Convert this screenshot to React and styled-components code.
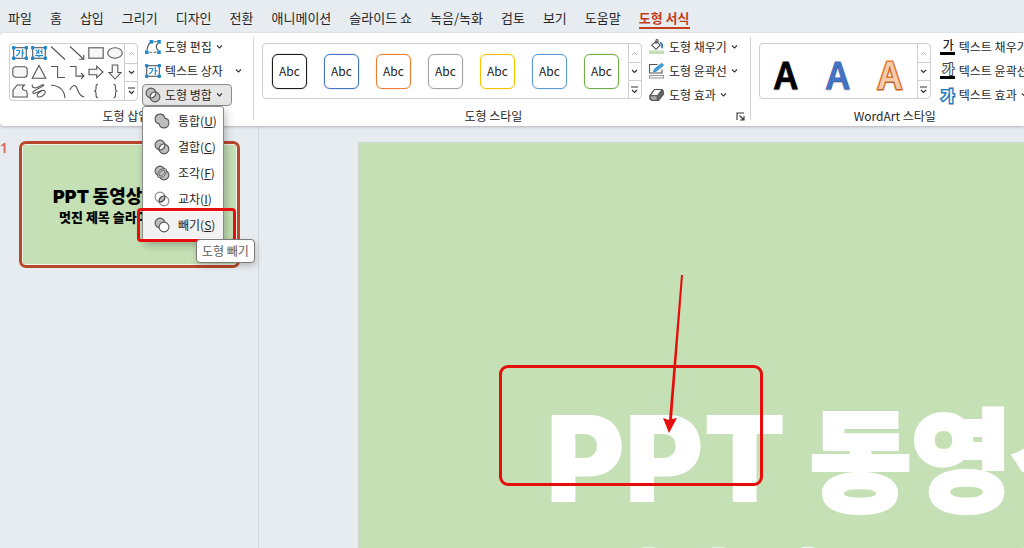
import React from "react";
import styled, { createGlobalStyle, css } from "styled-components";

const Global = createGlobalStyle`
  *, *::before, *::after { box-sizing: border-box; }
  body {
    margin: 0;
    background: #e7ecf1;
    color: #262626;
    font-family: "Noto Sans CJK KR", "Noto Sans", sans-serif;
    font-size: 12px;
    line-height: 16px;
  }
  button {
    font: inherit;
    color: inherit;
    background: none;
    border: 0;
    padding: 0;
    cursor: pointer;
  }
`;

const Shell = styled.div`
  display: flex;
  flex-direction: column;
  height: 100vh;
  overflow: hidden;
`;

/* ---------- tabs ---------- */

const TabBar = styled.nav`
  display: flex;
  flex: none;
  gap: 18px;
  height: 33px;
  padding: 8px 8px 0;
  font-size: 13px;
`;

const Tab = styled.button`
  position: relative;
  height: 20px;
  line-height: 20px;
  white-space: nowrap;
  ${(p) =>
    p.$active &&
    css`
      color: #c43e1c;
      font-weight: 700;
      &::after {
        content: "";
        position: absolute;
        left: 0;
        right: 0;
        bottom: -1px;
        height: 2px;
        background: #c43e1c;
      }
    `}
`;

/* ---------- ribbon ---------- */

const Ribbon = styled.div`
  position: relative;
  z-index: 2;
  display: flex;
  flex: none;
  height: 93px;
  background: #fff;
  border-radius: 4px 0 0 4px;
  box-shadow: 0 1px 3px rgba(0, 0, 0, 0.25);
`;

const Group = styled.section`
  position: relative;
  display: flex;
  flex-direction: column;
  flex: none;
  &:not(:last-child)::after {
    content: "";
    position: absolute;
    right: 0;
    top: 4px;
    bottom: 6px;
    width: 1px;
    background: #d6d6d6;
  }
`;

const GroupBody = styled.div`
  display: flex;
  align-items: flex-start;
  gap: ${(p) => p.$gap}px;
  height: 73px;
  padding: 3px ${(p) => p.$right}px 0 ${(p) => p.$left || 8}px;
`;

const GroupFoot = styled.div`
  display: flex;
  align-items: center;
  height: 20px;
  padding: 0 2px 0 0;
`;

const GroupLabel = styled.h2`
  flex: 1;
  margin: 0;
  font-size: 12px;
  font-weight: 400;
  text-align: center;
`;

const LaunchButton = styled.button`
  display: flex;
  width: 16px;
  height: 16px;
  align-items: center;
  justify-content: center;
`;

const Gallery = styled.div`
  display: flex;
  height: ${(p) => (p.$tall ? 58 : 56)}px;
  margin-top: 7px;
  border: 1px solid #cfcfcf;
  border-radius: 4px;
  overflow: hidden;
`;

const ShapeGrid = styled.div`
  display: grid;
  grid-template-columns: repeat(6, 19px);
  grid-template-rows: repeat(3, 1fr);
`;

const ShapeCell = styled.button`
  display: flex;
  align-items: center;
  justify-content: center;
`;

const Scroller = styled.div`
  display: grid;
  grid-template-rows: repeat(3, 1fr);
  width: 13px;
  border-left: 1px solid #cfcfcf;
`;

const ScrollButton = styled.button`
  display: flex;
  align-items: center;
  justify-content: center;
  color: ${(p) => (p.disabled ? "#b5b5b5" : "#333")};
  & + & {
    border-top: 1px solid #cfcfcf;
  }
`;

const SwatchRow = styled.div`
  display: flex;
  align-items: center;
  gap: 17px;
  padding: 0 9px;
`;

const Swatch = styled.button`
  width: 35px;
  height: 35px;
  border: 1px solid ${(p) => p.$color};
  border-radius: 6px;
  box-shadow: 0 0 1px ${(p) => p.$color};
  color: #222;
  line-height: 32px;
`;

const WordArtRow = styled.div`
  display: grid;
  grid-template-columns: repeat(3, 52px);
  width: 157px;
`;

const WordArt = styled.button`
  font-size: 37px;
  font-weight: 500;
  line-height: 58px;
  height: 54px;
  color: ${(p) => p.$fill};
  text-shadow: 0 1px 2px rgba(0, 0, 0, 0.35);
  -webkit-text-stroke: ${(p) => p.$width || 1}px ${(p) => p.$line};
  paint-order: stroke fill;
`;

const Commands = styled.div`
  display: flex;
  flex-direction: column;
  align-items: flex-start;
  gap: 2px;
`;

const CommandWrap = styled.div`
  position: relative;
`;

const Command = styled.button`
  display: flex;
  align-items: center;
  gap: 4px;
  height: 22px;
  padding: 0 8px 0 2px;
  border: 1px solid transparent;
  border-radius: 4px;
  white-space: nowrap;
  ${(p) =>
    p.$open &&
    css`
      background: #e6e6e6;
      border-color: #8c8c8c;
    `}
  ${(p) =>
    p.$split &&
    css`
      padding-right: 0;
      svg:last-child {
        margin-left: 8px;
      }
    `}
`;

/* ---------- merge menu ---------- */

const Menu = styled.div`
  position: absolute;
  top: 100%;
  left: 0;
  width: 82px;
  padding: 1px 0 2px;
  background: #fff;
  border: 1px solid #8a8a8a;
  border-radius: 3px;
  box-shadow: 2px 4px 8px rgba(0, 0, 0, 0.25);
`;

const MenuItem = styled.button`
  position: relative;
  display: flex;
  align-items: center;
  gap: 8px;
  width: 100%;
  height: 26px;
  padding-left: 11px;
  white-space: nowrap;
  background: ${(p) => (p.$hot ? "#f2f2f2" : "transparent")};
`;

const ItemMark = styled.span`
  position: absolute;
  top: -4px;
  left: -6px;
  width: 99px;
  height: 34px;
  border: 3px solid #e60d0d;
  border-radius: 4px;
`;

const Tooltip = styled.div`
  position: absolute;
  top: calc(100% - 1px);
  left: 53px;
  padding: 3px 5px;
  color: #5c5c5c;
  background: #fff;
  border: 1px solid #7a7a7a;
  border-radius: 4px;
  box-shadow: 1px 3px 6px rgba(0, 0, 0, 0.2);
  white-space: nowrap;
`;

/* ---------- workspace ---------- */

const Workspace = styled.main`
  display: flex;
  flex: 1;
  min-height: 0;
`;

const SlidePanel = styled.aside`
  display: flex;
  flex: none;
  align-items: flex-start;
  gap: 11px;
  width: 259px;
  padding: 15px 18px 0 0;
  border-right: 1px solid #d3d8dd;
`;

const SlideNumber = styled.span`
  width: 8px;
  color: #d66a51;
  font-family: "Noto Sans", sans-serif;
  font-size: 14px;
  font-weight: 600;
  line-height: 14px;
`;

const Thumb = styled.button`
  flex: 1;
  height: 127px;
  padding: 1px;
  border: 3px solid #b9472b;
  border-radius: 7px;
  background: #eef3ea;
  text-align: left;
`;

const ThumbSlide = styled.span`
  display: flex;
  flex-direction: column;
  height: 100%;
  padding: 40px 0 0 30px;
  overflow: hidden;
  background: #c5e0b4;
  color: #000;
  white-space: nowrap;
`;

const ThumbTitle = styled.span`
  font-family: Inter, "Noto Sans CJK KR", sans-serif;
  font-size: 18px;
  font-weight: 900;
  line-height: 24px;
`;

const ThumbSubtitle = styled.span`
  padding-left: 6px;
  font-size: 13px;
  font-weight: 900;
  line-height: 16px;
`;

const Stage = styled.div`
  flex: 1;
  min-width: 0;
  padding: 16px 0 0 99px;
`;

const Slide = styled.article`
  position: relative;
  height: 100%;
  padding: 251px 0 0 187px;
  overflow: hidden;
  background: #c5e0b4;
  border: 1px solid #cdd5cb;
  border-width: 1px 0 0 1px;
  color: #fff;
  white-space: nowrap;
`;

const SlideTitle = styled.h1`
  height: 124px;
  margin: 0;
  font-family: Inter, "Noto Sans CJK KR", sans-serif;
  font-size: 120px;
  font-weight: 900;
  line-height: 120px;
`;

const Hangul = styled.span`
  font-family: "Noto Sans CJK KR", sans-serif;
  font-size: 110px;
  -webkit-text-stroke: 4px #fff;
`;

const SlideSubtitle = styled.p`
  margin: 0;
  padding: 16px 0 0 46px;
  font-size: 76px;
  font-weight: 900;
  line-height: 90px;
`;

const FocusBox = styled.div`
  position: absolute;
  left: 140px;
  top: 222px;
  width: 264px;
  height: 121px;
  border: 3px solid #e60d0d;
  border-radius: 9px;
`;

const Arrow = styled.svg`
  position: absolute;
  left: 300px;
  top: 132px;
`;

/* ---------- icons ---------- */

const Svg = ({ children, w = 16, h = 16 }) => (
  <svg width={w} height={h} viewBox={`0 0 ${w} ${h}`} fill="none" stroke="#555" strokeWidth="1.1" aria-hidden="true">
    {children}
  </svg>
);

const Handles = () => (
  <g fill="#1e88d2" stroke="none">
    <rect x="0" y="1" width="3.4" height="3.4" rx="1" />
    <rect x="12.6" y="1" width="3.4" height="3.4" rx="1" />
    <rect x="0" y="11.6" width="3.4" height="3.4" rx="1" />
    <rect x="12.6" y="11.6" width="3.4" height="3.4" rx="1" />
  </g>
);

const TextBoxIcon = () => (
  <Svg>
    <rect x="1.7" y="2.7" width="12.6" height="10.6" />
    <path d="M4 5.5h3.6c0 2.4-1.4 4.4-3.4 5.4M10.3 4.3v7.6M10.3 7.8h2" stroke="#1e88d2" strokeWidth="1.2" />
    <Handles />
  </Svg>
);

const VerticalTextIcon = () => (
  <Svg>
    <rect x="1.7" y="2.7" width="12.6" height="10.6" />
    <path d="M4 10.6h8M8 10.6v1.9M10.8 4.2v4.6M10.8 6.500H9M4.600 4.600 8.400 8.600M5 8.600c2-.6 3-2 3-4.200" stroke="#1e88d2" strokeWidth="1.2" />
    <Handles />
  </Svg>
);

const shapeFill = "#f7f7f7";

const SHAPES = [
  ["텍스트 상자", <TextBoxIcon />],
  ["세로 텍스트 상자", <VerticalTextIcon />],
  ["선", <Svg><path d="M1 1.5 15 14.5" /></Svg>],
  ["화살표", <Svg><path d="M1 1.5 14.5 14M14.8 9.8v4.5h-4.6" /></Svg>],
  ["직사각형", <Svg><rect x=".8" y="2.8" width="14.4" height="10.4" fill={shapeFill} /></Svg>],
  ["타원", <Svg><ellipse cx="8" cy="8" rx="7.3" ry="5.2" fill={shapeFill} /></Svg>],
  ["둥근 사각형", <Svg><rect x=".8" y="2.8" width="14.4" height="10.4" rx="3" fill={shapeFill} /></Svg>],
  ["삼각형", <Svg><path d="M8 1.5 14.8 14.3H1.2Z" fill={shapeFill} /></Svg>],
  ["꺾인 연결선", <Svg><path d="M1 2.5h6.6v11H15" /></Svg>],
  ["꺾인 화살표", <Svg><path d="M1 2.5h6v9.6h8M12 9l3 3.1-3 3" /></Svg>],
  ["오른쪽 화살표", <Svg><path d="M1 5.3h7.7V2.2L15 8l-6.3 5.8v-3.1H1Z" fill={shapeFill} /></Svg>],
  ["아래쪽 화살표", <Svg><path d="M5.2 1v7.5H2L8 15l6-6.5h-3.2V1Z" fill={shapeFill} /></Svg>],
  ["자유형 도형", <Svg><path d="M1 14V7.2L5.2 2h7.2c-2.6 2.2-2.8 4.3-.6 5 2.6.1 3.4 1.6 3.4 3.6V14Z" fill={shapeFill} /></Svg>],
  ["자유 곡선", <Svg><path d="M1.200 1.500C.8 4.500 3 5.500 6 4.500 8.500 3.500 11 1.200 12.500 1.800 14.500 3 3 6.500 1.800 9.300 1.500 11.500 5 10 7.500 8.800 10.500 7.200 13.800 6.500 14.300 8.800 14.600 11.500 9.500 14.800 7 13.800 4.500 12.500 8 8.500 10.500 8.800" /></Svg>],
  ["호", <Svg><path d="M1 2.2c8 0 13.500 5 14 13" /></Svg>],
  ["곡선", <Svg><path d="M.8 7C3 2.5 5.800 1 7.600 4.500c1.700 4 2.700 9 7.600 9.500" /></Svg>],
  ["왼쪽 중괄호", <Svg><path d="M10 1.300C8 1.300 8 2.500 8 4v2.200C8 7.500 7.400 8 6 8c1.400 0 2 .5 2 1.800V12c0 1.500 0 2.700 2 2.700" /></Svg>],
  ["오른쪽 중괄호", <Svg><path d="M6.500 1.300c2 0 2 1.200 2 2.700v2.200c0 1.300.6 1.800 2 1.800-1.400 0-2 .5-2 1.800V12c0 1.500 0 2.700-2 2.700" /></Svg>],
];

const Caret = () => (
  <Svg w={7} h={6}>
    <path d="m1 1.500 2.500 2.500L6 1.500" stroke="#333" />
  </Svg>
);

const EditShapeIcon = () => (
  <Svg>
    <path d="M2 11C2.500 7.500 3.800 4.800 5.500 3.500M8.500 2.800h3M13 4.500C10.500 6 10.500 9.500 13.500 11.500M4.500 13.300h2.200M8.500 13.300h3" />
    <g fill="#1e88d2" stroke="none">
      <rect x="4.600" y="1" width="3.600" height="3.600" />
      <rect x="12.200" y="1" width="3.600" height="3.600" />
      <rect x="0" y="11.400" width="3.600" height="3.600" />
      <rect x="12.200" y="11.400" width="3.600" height="3.600" />
    </g>
  </Svg>
);

const FillIcon = () => (
  <Svg>
    <rect x="0" y="11.500" width="15" height="3.500" fill="#c5e0b4" stroke="none" />
    <path d="M7 2.200 11.200 6.200 7 10.300 2.800 6.200ZM7 5V1.200C7 .4 9 .4 9 1.200V4" fill="#fff" />
    <path d="M11 3.800c2.200.4 2.600 2.500 1.900 5.500" stroke="#1e6fb8" strokeWidth="1.600" />
  </Svg>
);

const OutlineIcon = () => (
  <Svg>
    <path d="M8.500 1.500h-8v8.500h12.500V6.500" />
    <path d="M4.500 8.800 5.500 6 12 .8c1.500-.6 2.800.8 2 2L7.500 8Z" fill="#46a3e0" stroke="#1e78bd" strokeWidth=".8" />
    <rect x=".5" y="12.500" width="14" height="2.500" fill="#fff" stroke="#999" />
  </Svg>
);

const EffectIcon = () => (
  <Svg>
    <path d="M5.500 2.500H12.500L14.300 4V7.500L9.500 13.500H3L1 12V8.500Z" fill="#666" />
    <path d="M5.500 2.500H13L8.500 8.800H1.200Z" fill="#fafafa" />
    <path d="M1.200 8.800H8.200V13.300H3L1.200 12Z" fill="#aaa" />
  </Svg>
);

const A = <circle cx="6" cy="6" r="4.900" />;
const B = <circle cx="10" cy="10" r="4.900" />;
const lens = "M10.850 5.150A4.900 4.900 0 0 1 5.150 10.850A4.900 4.900 0 0 1 10.850 5.150Z";

const UnionIcon = () => (
  <Svg>
    <path d="M5.150 10.850A4.900 4.900 0 1 1 10.850 5.150A4.900 4.900 0 1 1 5.150 10.850Z" fill="#bdbdbd" />
  </Svg>
);
const CombineIcon = () => (
  <Svg>
    <g fill="#bdbdbd">{A}{B}</g>
    <path d={lens} fill="#fff" />
  </Svg>
);
const FragmentIcon = () => (
  <Svg>
    <g fill="#bdbdbd">{A}{B}</g>
    <path d={lens} fill="#bdbdbd" stroke="#555" strokeWidth="3.600" />
    <path d={lens} fill="#bdbdbd" stroke="#fff" strokeWidth="1.800" />
    <path d={lens} fill="#bdbdbd" strokeWidth=".9" />
  </Svg>
);
const IntersectIcon = () => (
  <Svg>
    <g stroke="#888">{A}{B}</g>
    <path d={lens} fill="#bdbdbd" stroke="#444" />
  </Svg>
);
const SubtractIcon = () => (
  <Svg>
    <g fill="#bdbdbd">{A}</g>
    <g fill="#fff">{B}</g>
  </Svg>
);

const Glyph = styled.span`
  display: block;
  width: 15px;
  height: 15px;
  padding-left: ${(p) => (p.$effect ? 1 : 2)}px;
  border-bottom: ${(p) => (p.$effect ? 0 : 3)}px solid #000;
  color: ${(p) => (p.$hollow ? "#fff" : "#222")};
  font-size: ${(p) => (p.$effect ? 14 : 12)}px;
  font-weight: ${(p) => (p.$hollow ? 700 : 500)};
  line-height: ${(p) => (p.$effect ? 14 : 10)}px;
  ${(p) =>
    p.$hollow &&
    css`
      -webkit-text-stroke: ${p.$effect ? 3 : 2}px ${p.$effect ? "#1f78c1" : "#444"};
      paint-order: stroke fill;
    `}
`;

const ScrollColumn = () => (
  <Scroller>
    <ScrollButton disabled aria-label="위로">
      <svg width="7" height="5" fill="none" stroke="currentColor" aria-hidden="true"><path d="m1 4 2.500-2.500L6 4" /></svg>
    </ScrollButton>
    <ScrollButton aria-label="아래로">
      <svg width="7" height="5" fill="none" stroke="currentColor" strokeWidth="1.200" aria-hidden="true"><path d="m1 1 2.500 2.500L6 1" /></svg>
    </ScrollButton>
    <ScrollButton aria-label="자세히">
      <svg width="7" height="8" fill="none" stroke="currentColor" strokeWidth="1.200" aria-hidden="true"><path d="M0 1h7M1 4l2.500 2.500L6 4" /></svg>
    </ScrollButton>
  </Scroller>
);

const Launcher = ({ label }) => (
  <LaunchButton aria-label={label}>
    <Svg w={9} h={9}><path d="M1 8V1h7M3.500 3.500 8 8M8 4v4H4" stroke="#333" /></Svg>
  </LaunchButton>
);

const TABS = ["파일", "홈", "삽입", "그리기", "디자인", "전환", "애니메이션", "슬라이드 쇼", "녹음/녹화", "검토", "보기", "도움말", "도형 서식"];
const SWATCHES = ["#1c1c1c", "#4472c4", "#ed7d31", "#a5a5a5", "#ffc000", "#5b9bd5", "#70ad47"];
const MERGE = [
  ["통합", "U", UnionIcon],
  ["결합", "C", CombineIcon],
  ["조각", "F", FragmentIcon],
  ["교차", "I", IntersectIcon],
  ["빼기", "S", SubtractIcon],
];

export default function App() {
  return (
    <Shell>
      <Global />
      <TabBar>
        {TABS.map((t) => (
          <Tab key={t} $active={t === "도형 서식"}>{t}</Tab>
        ))}
      </TabBar>

      <Ribbon>
        <Group>
          <GroupBody $gap={4} $left={9} $right={11}>
            <Gallery $tall>
              <ShapeGrid>
                {SHAPES.map(([name, icon]) => (
                  <ShapeCell key={name} aria-label={name}>{icon}</ShapeCell>
                ))}
              </ShapeGrid>
              <ScrollColumn />
            </Gallery>
            <Commands>
              <Command><EditShapeIcon />도형 편집<Caret /></Command>
              <Command $split><TextBoxIcon />텍스트 상자<Caret /></Command>
              <CommandWrap>
                <Command $open aria-expanded="true"><CombineIcon />도형 병합<Caret /></Command>
                <Menu role="menu">
                  {MERGE.map(([name, key, Icon]) => (
                    <MenuItem key={key} role="menuitem" $hot={key === "S"}>
                      <Icon />
                      <span>{name}(<u>{key}</u>)</span>
                      {key === "S" && <ItemMark />}
                    </MenuItem>
                  ))}
                  <Tooltip role="tooltip">도형 빼기</Tooltip>
                </Menu>
              </CommandWrap>
            </Commands>
          </GroupBody>
          <GroupFoot><GroupLabel>도형 삽입</GroupLabel></GroupFoot>
        </Group>

        <Group>
          <GroupBody $gap={4} $right={4}>
            <Gallery>
              <SwatchRow>
                {SWATCHES.map((c) => (
                  <Swatch key={c} $color={c}>Abc</Swatch>
                ))}
              </SwatchRow>
              <ScrollColumn />
            </Gallery>
            <Commands>
              <Command><FillIcon />도형 채우기<Caret /></Command>
              <Command><OutlineIcon />도형 윤곽선<Caret /></Command>
              <Command><EffectIcon />도형 효과<Caret /></Command>
            </Commands>
          </GroupBody>
          <GroupFoot>
            <GroupLabel>도형 스타일</GroupLabel>
            <Launcher label="도형 서식 창" />
          </GroupFoot>
        </Group>

        <Group>
          <GroupBody $gap={6} $right={9}>
            <Gallery>
              <WordArtRow>
                <WordArt $fill="#000" $line="#000">A</WordArt>
                <WordArt $fill="#4472c4" $line="#4472c4">A</WordArt>
                <WordArt $fill="#f8cbad" $line="#ed7d31" $width={3}>A</WordArt>
              </WordArtRow>
              <ScrollColumn />
            </Gallery>
            <Commands>
              <Command><Glyph>가</Glyph>텍스트 채우기<Caret /></Command>
              <Command><Glyph $hollow>가</Glyph>텍스트 윤곽선<Caret /></Command>
              <Command><Glyph $hollow $effect>가</Glyph>텍스트 효과<Caret /></Command>
            </Commands>
          </GroupBody>
          <GroupFoot>
            <GroupLabel>WordArt 스타일</GroupLabel>
            <Launcher label="텍스트 효과 서식 창" />
          </GroupFoot>
        </Group>
      </Ribbon>

      <Workspace>
        <SlidePanel>
          <SlideNumber>1</SlideNumber>
          <Thumb>
            <ThumbSlide>
              <ThumbTitle>PPT 동영상</ThumbTitle>
              <ThumbSubtitle>멋진 제목 슬라이드</ThumbSubtitle>
            </ThumbSlide>
          </Thumb>
        </SlidePanel>
        <Stage>
          <Slide>
            <SlideTitle>PPT <Hangul>동영상</Hangul></SlideTitle>
            <SlideSubtitle>멋진 제목 슬라이드</SlideSubtitle>
            <FocusBox />
            <Arrow width="30" height="160" viewBox="0 0 30 160" fill="#e60d0d" aria-hidden="true">
              <path d="M22 0h2L13 144l5-1L10 158 4 143l6 2Z" />
            </Arrow>
          </Slide>
        </Stage>
      </Workspace>
    </Shell>
  );
}
